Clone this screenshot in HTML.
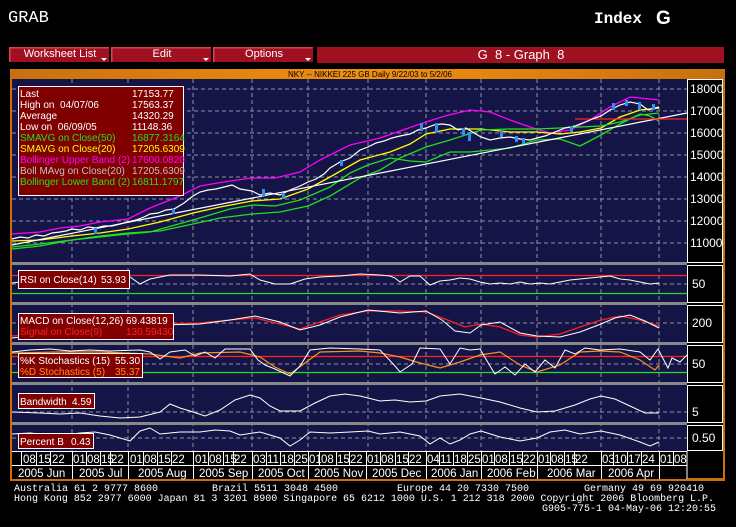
<!DOCTYPE html>
<html><head><style>
body{margin:0;background:#000;width:736px;height:527px;overflow:hidden;position:relative;font-family:"Liberation Sans",sans-serif}
svg{position:absolute;left:0;top:0}
</style></head><body>
<svg width="736" height="527" viewBox="0 0 736 527" font-family="Liberation Sans, sans-serif">
<rect width="736" height="527" fill="#000"/>
<text x="8" y="22" fill="#fff" font-family="Liberation Mono, monospace" font-size="17">GRAB</text>
<text x="594" y="23" fill="#fff" font-family="Liberation Mono, monospace" font-size="16" font-weight="bold">Index</text>
<text x="656" y="24" fill="#fff" font-size="19" font-weight="bold">G</text>
<g font-size="11" fill="#fff">
<rect x="9" y="47" width="100" height="15" fill="#a01020"/><rect x="9" y="47" width="100" height="1.5" fill="#e04050"/><rect x="9" y="47" width="1.5" height="15" fill="#e04050"/>
<text x="60" y="57" text-anchor="middle">Worksheet List</text><path d="M101 58h6l-3 3z" fill="#fff"/>
<rect x="111" y="47" width="100" height="15" fill="#a01020"/><rect x="111" y="47" width="100" height="1.5" fill="#e04050"/><rect x="111" y="47" width="1.5" height="15" fill="#e04050"/>
<text x="162" y="57" text-anchor="middle">Edit</text><path d="M203 58h6l-3 3z" fill="#fff"/>
<rect x="213" y="47" width="100" height="15" fill="#a01020"/><rect x="213" y="47" width="100" height="1.5" fill="#e04050"/><rect x="213" y="47" width="1.5" height="15" fill="#e04050"/>
<text x="264" y="57" text-anchor="middle">Options</text><path d="M305 58h6l-3 3z" fill="#fff"/>
<rect x="317" y="47" width="407" height="16" fill="#a01020"/>
<text x="521" y="59" text-anchor="middle" font-size="13" xml:space="preserve">G  8 - Graph  8</text>
</g>
<defs><linearGradient id="og" x1="0" x2="1"><stop offset="0" stop-color="#c87010"/><stop offset="0.5" stop-color="#f09010"/><stop offset="1" stop-color="#c87010"/></linearGradient></defs>
<rect x="10" y="69" width="715" height="412" fill="#c87010"/>
<rect x="10" y="69" width="715" height="10" fill="url(#og)"/>
<text x="370" y="77" text-anchor="middle" font-size="8" fill="#000">NKY -- NIKKEI 225 GB Daily 9/22/03 to 5/2/06</text>
<rect x="12" y="79" width="675" height="372" fill="#141446"/>
<rect x="687" y="79" width="36" height="399" fill="#000"/>
<g stroke="#fff" fill="none" stroke-width="1"><rect x="687.5" y="79.5" width="35" height="183"/><rect x="687.5" y="265.5" width="35" height="37"/><rect x="687.5" y="305.5" width="35" height="37"/><rect x="687.5" y="345.5" width="35" height="37"/><rect x="687.5" y="385.5" width="35" height="37"/><rect x="687.5" y="425.5" width="35" height="25"/></g>
<g stroke="#9090a0" stroke-dasharray="4,3" stroke-width="1">
<path d="M72 79V451M128 79V451M193 79V451M252 79V451M308 79V451M368 79V451M426 79V451M481 79V451M537 79V451M601 79V451M659 79V451"/>
<path d="M12 89H687M12 111H687M12 133H687M12 155H687M12 177H687M12 199H687M12 221H687M12 243H687"/>
<path d="M12 284H687M12 323H687M12 364H687M12 412H687M12 438H687"/>
</g>
<g fill="#888"><rect x="12" y="262" width="675" height="3"/><rect x="12" y="302" width="675" height="3"/><rect x="12" y="342" width="675" height="3"/><rect x="12" y="382" width="675" height="3"/><rect x="12" y="422" width="675" height="3"/></g>
<g fill="none" stroke-width="1.3">
<path stroke="#ff00ff" d="M12 234L40 232 60 228 80 226 100 222 128 219 150 208 180 196 200 186 230 181 252 178 275 178 300 172 320 160 350 145 380 138 400 131 426 122 445 116 470 110 490 112 510 120 530 127 550 133 570 130 590 120 610 107 630 97 650 99 659 100"/>
<path stroke="#ffff00" d="M12 241L40 240 72 236 100 233 128 229 160 222 193 213 220 207 252 201 280 199 308 189 330 177 360 160 390 152 410 144 426 134 450 129 481 129 510 132 537 132 560 134 580 132 601 128 620 117 640 110 659 108"/>
<path stroke="#20e020" d="M12 247L40 244 72 240 100 236 128 233 160 231 193 224 220 218 252 214 280 212 308 206 330 196 360 178 380 170 400 158 426 147 450 140 481 130 510 129 537 129 560 128 580 127 601 126 620 122 640 115 659 113"/>
<path stroke="#20e020" d="M12 249L40 246 72 240 100 237 128 234 150 232 193 220 230 209 252 205 275 206 300 200 330 187 350 173 368 165 390 158 410 161 426 162 450 152 470 152 490 150 510 148 537 140 560 139 580 146 601 135 620 124 640 114 650 116 659 121"/>
<path stroke="#fff" stroke-width="1.2" d="M12 245L687 113"/>
<path stroke="#ff2020" d="M575 119H687"/>
</g>
<path fill="none" stroke="#fff" stroke-width="1.2" d="M12 239L20 237 28 238 36 235 44 236 52 233 60 232 66 231 72 229 80 230 88 227 96 228 104 226 112 226 120 224 128 222 136 220 144 217 150 214 158 213 166 210 174 209 184 203 193 196 200 192 208 190 216 189 224 187 232 185 240 189 252 191 260 195 270 193 280 195 290 190 300 186 308 182 316 179 324 174 330 168 340 162 350 158 360 150 368 147 376 143 384 141 392 138 400 136 410 134 418 130 426 128 434 125 442 124 450 125 458 130 466 128 474 133 481 137 490 140 500 138 510 137 520 139 530 140 537 138 545 136 555 132 565 128 575 126 585 122 595 118 601 116 610 110 620 105 630 102 640 104 648 110 655 108 659 107"/>
<g fill="#3090f0"><rect x="94" y="228" width="3" height="6"/><rect x="172" y="209" width="3" height="5"/><rect x="262" y="189" width="3" height="7"/><rect x="282" y="193" width="3" height="6"/><rect x="340" y="160" width="3" height="6"/><rect x="420" y="123" width="3" height="8"/><rect x="435" y="123" width="3" height="10"/><rect x="462" y="128" width="3" height="8"/><rect x="468" y="132" width="3" height="9"/><rect x="500" y="131" width="3" height="6"/><rect x="515" y="136" width="3" height="6"/><rect x="522" y="138" width="3" height="6"/><rect x="570" y="126" width="3" height="6"/><rect x="612" y="103" width="3" height="7"/><rect x="625" y="100" width="3" height="6"/><rect x="638" y="102" width="3" height="8"/><rect x="652" y="104" width="3" height="6"/></g>
<g fill="#fff" font-size="12">
<text x="690" y="93">18000</text><text x="690" y="115">17000</text><text x="690" y="137">16000</text><text x="690" y="159">15000</text><text x="690" y="181">14000</text><text x="690" y="203">13000</text><text x="690" y="225">12000</text><text x="690" y="247">11000</text>
<text x="692" y="288">50</text><text x="692" y="327">200</text><text x="692" y="368">50</text><text x="692" y="416">5</text><text x="692" y="442">0.50</text>
</g>
<rect x="18.5" y="86.5" width="165" height="109" fill="#800000" stroke="#fff"/>
<g font-size="10">
<g fill="#fff"><text x="20" y="97">Last</text><text x="132" y="97">17153.77</text>
<text x="20" y="108" xml:space="preserve">High on  04/07/06</text><text x="132" y="108">17563.37</text>
<text x="20" y="119">Average</text><text x="132" y="119">14320.29</text>
<text x="20" y="130" xml:space="preserve">Low on  06/09/05</text><text x="132" y="130">11148.36</text></g>
<g fill="#20e020"><text x="20" y="141">SMAVG on Close(50)</text><text x="132" y="141">16877.3164</text></g>
<g fill="#ffff00"><text x="20" y="152">SMAVG on Close(20)</text><text x="132" y="152">17205.6309</text></g>
<g fill="#ff00ff"><text x="20" y="163">Bollinger Upper Band (2)</text><text x="132" y="163">17600.0820</text></g>
<g fill="#c0c0c0"><text x="20" y="174">Boll MAvg on Close(20)</text><text x="132" y="174">17205.6309</text></g>
<g fill="#20e020"><text x="20" y="185">Bollinger Lower Band (2)</text><text x="132" y="185">16811.1797</text></g>
</g>
<path stroke="#ff2020" d="M12 275.5H687" stroke-width="1.2"/><path stroke="#20e020" d="M12 293.5H687" stroke-width="1.2"/>
<path fill="none" stroke="#fff" d="M12 283L20 282 30 279 40 277 60 277 80 276 100 275 130 277 140 284 150 279 170 275 200 275 230 276 250 274 260 280 275 284 290 284 305 279 320 277 340 276 360 274 380 275 390 276 395 278 400 282 410 276 420 276 430 285 440 281 450 280 460 278 470 279 480 282 490 284 500 283 510 284 520 282 530 284 540 283 550 284 560 282 570 280 580 279 600 277 610 276 620 279 630 280 640 282 650 284 659 283"/>
<rect x="18.5" y="270.5" width="111" height="18" fill="#800000" stroke="#fff"/><text x="20" y="283" fill="#fff" font-size="10">RSI on Close(14)</text><text x="101" y="283" fill="#fff" font-size="10">53.93</text>
<path fill="none" stroke="#ff2020" stroke-width="1.3" d="M12 336L40 334 80 330 120 327 160 324 200 323 230 320 255 318 280 324 300 329 320 322 340 315 368 311 400 311 426 312 445 319 465 327 481 324 500 327 520 335 537 337 560 334 580 327 601 320 620 316 640 320 659 326"/>
<path fill="none" stroke="#fff" d="M12 338L40 335 80 331 120 326 160 325 200 324 230 320 255 316 280 322 300 330 320 325 340 317 368 310 400 313 426 311 442 320 455 331 470 333 481 325 500 322 520 333 537 336 560 337 580 332 601 324 615 318 630 315 645 321 659 328"/>
<rect x="18.5" y="313.5" width="155" height="26" fill="#800000" stroke="#fff"/>
<text x="20" y="324" fill="#fff" font-size="10">MACD on Close(12,26)</text><text x="126" y="324" fill="#fff" font-size="10">69.43819</text>
<text x="20" y="335" fill="#ff2020" font-size="10">Signal on Close(9)</text><text x="126" y="335" fill="#ff2020" font-size="10">130.59430</text>
<path stroke="#ff2020" d="M12 356.5H687" stroke-width="1.2"/><path stroke="#20e020" d="M12 372.5H687" stroke-width="1.2"/>
<path fill="none" stroke="#ff9020" stroke-width="1.2" d="M12 353L60 352 100 352 150 354 180 358 200 353 240 352 260 357 275 367 290 374 305 363 320 352 360 351 380 353 400 357 420 363 440 368 460 362 480 355 500 352 520 365 537 372 560 365 580 352 600 351 620 352 640 360 655 370 659 365"/>
<path fill="none" stroke="#fff" d="M12 352L30 350 50 349 70 351 90 350 110 351 140 350 150 352 160 359 170 352 185 350 195 356 205 352 215 358 225 349 250 349 258 360 265 365 275 369 290 376 300 366 310 350 330 348 360 349 380 350 395 366 400 372 412 364 420 348 440 349 450 364 460 348 470 350 480 349 490 366 495 374 505 367 515 375 525 364 535 372 545 360 555 368 565 350 575 354 585 348 600 350 620 349 640 352 650 360 658 349 668 368 672 358 680 362 687 355"/>
<rect x="18.5" y="353.5" width="124" height="24" fill="#800000" stroke="#fff"/>
<text x="20" y="364" fill="#fff" font-size="10">%K Stochastics (15)</text><text x="115" y="364" fill="#fff" font-size="10">55.30</text>
<text x="20" y="375" fill="#ff9020" font-size="10">%D Stochastics (5)</text><text x="115" y="375" fill="#ff9020" font-size="10">35.37</text>
<path fill="none" stroke="#fff" d="M12 412L40 413 60 414 80 413 100 416 120 418 140 417 160 412 170 404 180 408 190 411 205 416 220 410 235 400 250 395 260 398 270 406 280 411 300 411 315 403 330 396 345 394 360 396 380 401 395 400 410 402 426 401 440 396 460 394 481 398 500 402 520 408 537 412 555 411 575 405 590 399 601 396 615 399 630 406 645 413 659 413"/>
<rect x="18.5" y="393.5" width="76" height="15" fill="#800000" stroke="#fff"/><text x="20" y="405" fill="#fff" font-size="10">Bandwidth</text><text x="72" y="405" fill="#fff" font-size="10">4.59</text>
<path fill="none" stroke="#fff" d="M12 434L30 433 60 436 80 433 95 432 110 435 130 441 140 431 150 428 160 434 180 432 200 432 215 430 230 431 240 435 260 432 280 438 290 446 300 440 310 432 330 433 350 432 368 431 380 434 400 432 420 436 430 444 440 438 450 444 460 440 470 434 481 431 500 437 520 441 537 438 550 432 565 430 580 434 601 431 620 435 640 442 650 446 659 442"/>
<rect x="18.5" y="433.5" width="75" height="15" fill="#800000" stroke="#fff"/><text x="20" y="445" fill="#fff" font-size="10">Percent B</text><text x="71" y="445" fill="#fff" font-size="10">0.43</text>
<rect x="12" y="451" width="675" height="28" fill="#000"/>
<path stroke="#fff" d="M12 451.5H687M12 465.5H687M687 451V479M72.5 451V479M128.5 451V479M193.5 451V479M252.5 451V479M308.5 451V479M366.5 451V479M426.5 451V479M481.5 451V479M537.5 451V479M601.5 451V479M659.5 451V479M21.5 451V465M36.5 451V465M50.5 451V465M86.5 451V465M100.5 451V465M110.5 451V465M143.5 451V465M157.5 451V465M171.5 451V465M208.5 451V465M223.5 451V465M233.5 451V465M266.5 451V465M280.5 451V465M294.5 451V465M319.5 451V465M336.5 451V465M349.5 451V465M380.5 451V465M395.5 451V465M408.5 451V465M439.5 451V465M453.5 451V465M467.5 451V465M494.5 451V465M509.5 451V465M522.5 451V465M550.5 451V465M564.5 451V465M574.5 451V465M613.5 451V465M627.5 451V465M641.5 451V465M673.5 451V465"/>
<g fill="#fff" font-size="11.5">
<text x="23" y="463">08</text><text x="38" y="463">15</text><text x="52" y="463">22</text>
<text x="73" y="463">01</text><text x="87" y="463">08</text><text x="101" y="463">15</text><text x="111" y="463">22</text>
<text x="130" y="463">01</text><text x="144" y="463">08</text><text x="158" y="463">15</text><text x="172" y="463">22</text>
<text x="195" y="463">01</text><text x="209" y="463">08</text><text x="224" y="463">15</text><text x="234" y="463">22</text>
<text x="253" y="463">03</text><text x="267" y="463">11</text><text x="281" y="463">18</text><text x="295" y="463">25</text>
<text x="309" y="463">01</text><text x="321" y="463">08</text><text x="337" y="463">15</text><text x="350" y="463">22</text>
<text x="367" y="463">01</text><text x="381" y="463">08</text><text x="396" y="463">15</text><text x="409" y="463">22</text>
<text x="427" y="463">04</text><text x="440" y="463">11</text><text x="454" y="463">18</text><text x="468" y="463">25</text>
<text x="482" y="463">01</text><text x="495" y="463">08</text><text x="510" y="463">15</text><text x="523" y="463">22</text>
<text x="538" y="463">01</text><text x="551" y="463">08</text><text x="565" y="463">15</text><text x="575" y="463">22</text>
<text x="602" y="463">03</text><text x="614" y="463">10</text><text x="628" y="463">17</text><text x="642" y="463">24</text>
<text x="660" y="463">01</text><text x="674" y="463">08</text>
<text x="18" y="477">2005 Jun</text><text x="79" y="477">2005 Jul</text><text x="138" y="477">2005 Aug</text><text x="199" y="477">2005 Sep</text><text x="258" y="477">2005 Oct</text><text x="314" y="477">2005 Nov</text><text x="372" y="477">2005 Dec</text><text x="431" y="477">2006 Jan</text><text x="487" y="477">2006 Feb</text><text x="547" y="477">2006 Mar</text><text x="608" y="477">2006 Apr</text>
</g>
<g fill="#fff" font-family="Liberation Mono, monospace" font-size="10" xml:space="preserve">
<text x="14" y="491">Australia 61 2 9777 8600</text><text x="212" y="491">Brazil 5511 3048 4500</text><text x="397" y="491">Europe 44 20 7330 7500</text><text x="584" y="491">Germany 49 69 920410</text>
<text x="14" y="501" textLength="700">Hong Kong 852 2977 6000 Japan 81 3 3201 8900 Singapore 65 6212 1000 U.S. 1 212 318 2000 Copyright 2006 Bloomberg L.P.</text>
<text x="542" y="511">G905-775-1 04-May-06 12:20:55</text>
</g>
</svg>
</body></html>
